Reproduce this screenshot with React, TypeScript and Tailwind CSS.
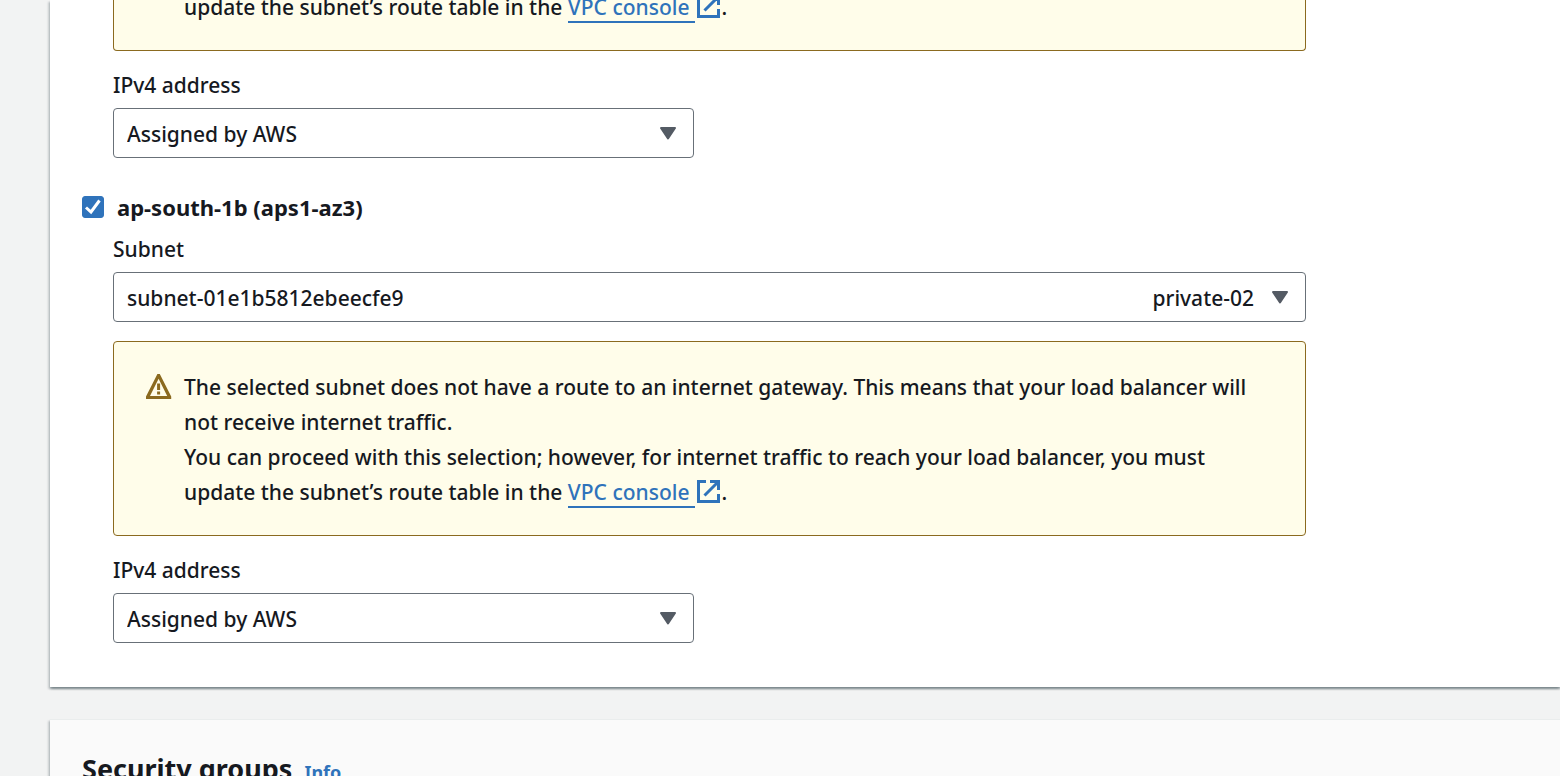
import { ReactNode, useState } from "react";

function ExternalIcon() {
  return (
    <svg viewBox="0 0 26 26" className="inline-block size-[26px] align-[-4px]" fill="none" stroke="currentColor" strokeWidth="3" aria-hidden="true">
      <path d="M11 3.5H3.5v20h20V16M15 3.5h8.5V12M9.5 17.5l13-13" />
    </svg>
  );
}

function WarningIcon() {
  return (
    <svg viewBox="0 0 26 26" className="mt-[3px] size-[26px] shrink-0 fill-[#8b6a1f]" fillRule="evenodd" aria-hidden="true">
      <path d="M11.4 1h2.4l11.4 22.5V26H0v-2.5zM12.6 5.8L4 23h17.2z" />
      <path d="M11.1 10.5h3v6.5h-3zM11.1 18.5h3v3h-3z" />
    </svg>
  );
}

function VpcLine() {
  return (
    <>
      update the subnet’s route table in the{" "}
      <a href="#vpc" className="text-[#2f73bb]">
        <span className="border-b-2 border-[#2f73bb] pr-[6px]">VPC console</span>
        <ExternalIcon />
      </a>
      .
    </>
  );
}

type SelectFieldProps = {
  id: string;
  label: string;
  value: string;
  tag?: string;
  narrow?: boolean;
};

function SelectField({ id, label, value, tag, narrow }: SelectFieldProps) {
  return (
    <div className={narrow ? "w-full max-w-[581px]" : "w-full"}>
      <label htmlFor={id} className="mb-[5px] block">
        {label}
      </label>
      <div className="grid items-center">
        <select
          id={id}
          className="col-start-1 row-start-1 h-[50px] w-full appearance-none rounded-[4px] border border-[#687078] bg-white px-[13px] pt-[2px] font-medium"
        >
          <option>{value}</option>
        </select>
        <div className="pointer-events-none col-start-1 row-start-1 mr-[17px] flex items-center gap-[17px] justify-self-end">
          {tag && <span className="pt-[2px]">{tag}</span>}
          <svg viewBox="0 0 18 14" className="h-[14px] w-[18px] fill-[#545b64] stroke-[#545b64]" strokeWidth="2" strokeLinejoin="round" aria-hidden="true">
            <path d="M2 2h14L9 12.5z" />
          </svg>
        </div>
      </div>
    </div>
  );
}

function Panel({ className, children }: { className: string; children: ReactNode }) {
  return (
    <section
      className={`pl-8 shadow-[0_2px_2px_0_rgba(0,28,36,0.3),2px_2px_2px_0_rgba(0,28,36,0.15),-2px_2px_2px_0_rgba(0,28,36,0.15)] ${className}`}
    >
      {children}
    </section>
  );
}

export default function App() {
  const [zone, setZone] = useState(true);
  return (
    <main className="flex h-screen flex-col gap-8 overflow-hidden bg-[#f2f3f3] pl-[50px] font-['Noto_Sans','Open_Sans',sans-serif] text-[21px] leading-[35px] font-medium text-[#16191f]">
      <Panel className="shrink-0 bg-white pb-[44px]">
        <div className="ml-[31px] max-w-[1193px]">
          <div className="-mt-[10px] mb-[17px] rounded-b-[4px] border border-t-0 border-[#8b6a1f] bg-[#fffdea] pr-7 pb-[25px] pl-[70px]">
            <p>
              <VpcLine />
            </p>
          </div>
          <SelectField id="ipv4-a" label="IPv4 address" value="Assigned by AWS" narrow />
        </div>

        <label className="mt-8 mb-[7px] flex items-start gap-[13px] text-[22px] font-bold">
          <span className="mt-[6px] grid size-[22px] shrink-0">
            <input
              type="checkbox"
              checked={zone}
              onChange={(e) => setZone(e.target.checked)}
              className="col-start-1 row-start-1 size-[22px] appearance-none rounded-[3px] border border-[#687078] bg-white checked:border-[#2f73bb] checked:bg-[#2f73bb]"
            />
            {zone && (
              <svg viewBox="0 0 22 22" className="pointer-events-none col-start-1 row-start-1 size-[22px]" fill="none" stroke="white" strokeWidth="3" aria-hidden="true">
                <path d="M4 11.5l5 4.5L17.5 4.5" />
              </svg>
            )}
          </span>
          ap-south-1b (aps1-az3)
        </label>

        <div className="ml-[31px] max-w-[1193px]">
          <SelectField id="subnet-b" label="Subnet" value="subnet-01e1b5812ebeecfe9" tag="private-02" />
          <div className="mt-[19px] mb-[17px] flex gap-3 rounded-[4px] border border-[#8b6a1f] bg-[#fffdea] pt-[28px] pr-7 pb-[25px] pl-8">
            <WarningIcon />
            <div>
              <p>
                The selected subnet does not have a route to an internet gateway. This means that your load balancer will not receive internet traffic.
              </p>
              <p>
                You can proceed with this selection; however, for internet traffic to reach your load balancer, you must <VpcLine />
              </p>
            </div>
          </div>
          <SelectField id="ipv4-b" label="IPv4 address" value="Assigned by AWS" narrow />
        </div>
      </Panel>

      <Panel className="h-[120px] shrink-0 border-t border-[#eaeded] bg-[#fafafa] pt-[31px]">
        <div className="flex items-baseline gap-3">
          <h2 className="text-[27px] font-bold">Security groups</h2>
          <a href="#info" className="text-[18px] font-bold text-[#2f73bb]">
            Info
          </a>
        </div>
      </Panel>
    </main>
  );
}
